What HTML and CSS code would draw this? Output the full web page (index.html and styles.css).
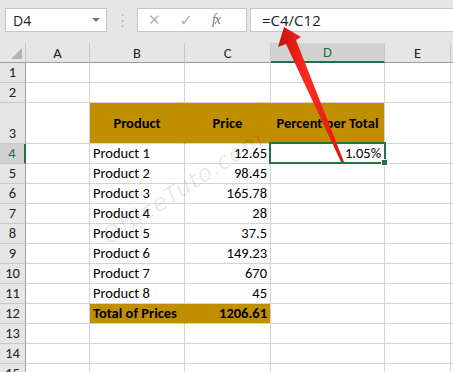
FILE: index.html
```html
<!DOCTYPE html>
<html lang="en">
<head>
<meta charset="UTF-8">
<meta name="viewport" content="width=device-width, initial-scale=1.0">
<title>Percent per Total</title>
<link rel="stylesheet" href="styles.css">
</head>
<body>

<div class="formula-bar">
    <div class="name-box">D4<span class="name-arrow"></span></div>
    <div class="grip">&#8942;</div>
    <div class="fx-buttons">
        <span class="fx-btn">&#10005;</span>
        <span class="fx-btn check">&#10003;</span>
        <span class="fx-btn fx">fx</span>
    </div>
    <div class="formula-input">=C4/C12</div>
</div>

<div class="sheet">
    <!-- column headers -->
    <div class="hd corner"><span class="corner-tri"></span></div>
    <div class="hd col">A</div>
    <div class="hd col">B</div>
    <div class="hd col">C</div>
    <div class="hd col active-col">D</div>
    <div class="hd col">E</div>
    <div class="hd col"></div>

    <div class="hd row">1</div><div class="c"></div><div class="c"></div><div class="c"></div><div class="c"></div><div class="c"></div><div class="c"></div>
    <div class="hd row">2</div><div class="c"></div><div class="c"></div><div class="c"></div><div class="c"></div><div class="c"></div><div class="c"></div>
    <div class="hd row">3</div><div class="c"></div>
    <div class="c gold center mid">Product</div>
    <div class="c gold center mid">Price</div>
    <div class="c gold center mid last">Percent per Total</div>
    <div class="c"></div><div class="c"></div>

    <div class="hd row active-row">4</div><div class="c"></div><div class="c">Product 1</div><div class="c num">12.65</div><div class="c num selected">1.05%</div><div class="c"></div><div class="c"></div>
    <div class="hd row">5</div><div class="c"></div><div class="c">Product 2</div><div class="c num">98.45</div><div class="c"></div><div class="c"></div><div class="c"></div>
    <div class="hd row">6</div><div class="c"></div><div class="c">Product 3</div><div class="c num">165.78</div><div class="c"></div><div class="c"></div><div class="c"></div>
    <div class="hd row">7</div><div class="c"></div><div class="c">Product 4</div><div class="c num">28</div><div class="c"></div><div class="c"></div><div class="c"></div>
    <div class="hd row">8</div><div class="c"></div><div class="c">Product 5</div><div class="c num">37.5</div><div class="c"></div><div class="c"></div><div class="c"></div>
    <div class="hd row">9</div><div class="c"></div><div class="c">Product 6</div><div class="c num">149.23</div><div class="c"></div><div class="c"></div><div class="c"></div>
    <div class="hd row">10</div><div class="c"></div><div class="c">Product 7</div><div class="c num">670</div><div class="c"></div><div class="c"></div><div class="c"></div>
    <div class="hd row">11</div><div class="c"></div><div class="c">Product 8</div><div class="c num">45</div><div class="c"></div><div class="c"></div><div class="c"></div>
    <div class="hd row">12</div><div class="c"></div><div class="c gold">Total of Prices</div><div class="c gold num last">1206.61</div><div class="c"></div><div class="c"></div><div class="c"></div>
    <div class="hd row">13</div><div class="c"></div><div class="c"></div><div class="c"></div><div class="c"></div><div class="c"></div><div class="c"></div>
    <div class="hd row">14</div><div class="c"></div><div class="c"></div><div class="c"></div><div class="c"></div><div class="c"></div><div class="c"></div>
    <div class="hd row">15</div><div class="c"></div><div class="c"></div><div class="c"></div><div class="c"></div><div class="c"></div><div class="c"></div>
</div>

<div class="watermark">OfficeTuto.com</div>

<!-- red pointer from the result cell to the formula -->
<svg class="pointer" width="453" height="372" viewBox="0 0 453 372">
    <defs>
        <linearGradient id="arrowFill" x1="0" y1="0" x2="1" y2="0">
            <stop offset="0" stop-color="#c40f0b"/>
            <stop offset="0.45" stop-color="#ff2b20"/>
            <stop offset="1" stop-color="#d8150f"/>
        </linearGradient>
    </defs>
    <polygon points="284,27 301,37 296,40 344,162 341,162 286,44 278,47" fill="url(#arrowFill)"/>
</svg>

</body>
</html>
```

FILE: styles.css
```css
body {
    margin: 0;
    width: 453px;
    height: 372px;
    overflow: hidden;
    background-color: #fff;
    font-family: Calibri, Carlito, Lato, sans-serif;
    font-size: 14.5px;
    color: #000;
    position: relative;
}

/* formula bar */
.formula-bar {
    height: 43px;
    background-color: #e6e6e6;
    display: flex;
    align-items: flex-start;
    padding-top: 8px;
    box-sizing: border-box;
}
.name-box {
    margin-left: 5px;
    width: 102px;
    height: 24px;
    box-sizing: border-box;
    background-color: #fff;
    border: 1px solid #c6c6c6;
    display: flex;
    align-items: center;
    padding-left: 7px;
    font-family: "Segoe UI", "Open Sans", sans-serif;
    font-size: 14px;
    color: #222;
    position: relative;
}
.name-arrow {
    position: absolute;
    right: 6px;
    top: 9px;
    border-left: 4px solid transparent;
    border-right: 4px solid transparent;
    border-top: 4px solid #777;
}
.grip {
    width: 30px;
    text-align: center;
    color: #bcbcbc;
    font-size: 15px;
    line-height: 24px;
}
.fx-buttons {
    width: 110px;
    height: 24px;
    box-sizing: border-box;
    background-color: #fff;
    border: 1px solid #c6c6c6;
    display: flex;
    align-items: center;
    padding-left: 10px;
    gap: 19px;
}
.fx-btn {
    color: #b3b3b3;
    font-size: 15px;
    font-family: "DejaVu Sans", sans-serif;
}
.fx-btn.check {
    font-size: 16px;
}
.fx-btn.fx {
    font-family: "Liberation Serif", serif;
    font-style: italic;
    color: #777;
    font-size: 14px;
    letter-spacing: -1px;
}
.formula-input {
    margin-left: 3px;
    flex: 1;
    height: 24px;
    box-sizing: border-box;
    background-color: #fff;
    border: 1px solid #c6c6c6;
    border-right: none;
    padding-left: 11px;
    font-family: "Segoe UI", "Open Sans", sans-serif;
    font-size: 15px;
    line-height: 22px;
    color: #222;
}

/* grid */
.sheet {
    display: grid;
    grid-template-columns: 26px 64px 95px 86px 114px 66px 1fr;
    grid-template-rows: 20px 20px 20px 41px;
    grid-auto-rows: 20px;
}
.sheet > div {
    box-sizing: border-box;
    border-right: 1px solid #d4d4d4;
    border-bottom: 1px solid #d4d4d4;
    white-space: nowrap;
    overflow: hidden;
}
.c {
    display: flex;
    align-items: flex-end;
    padding: 0 3px 1px 3px;
    line-height: 18px;
}
.c.num {
    justify-content: flex-end;
}
.c.center {
    justify-content: center;
}
.c.mid {
    align-items: center;
    padding-bottom: 0;
}
.c.gold {
    background-color: #bf8f00;
    font-weight: bold;
    border-right-color: #bf8f00;
}
.c.gold.last {
    border-right-color: #d4d4d4;
}
.c.selected {
    position: relative;
    overflow: visible;
}
.c.selected::after {
    content: "";
    position: absolute;
    left: -2px;
    top: -2px;
    right: -2px;
    bottom: -1px;
    border: 2px solid #217346;
}
.c.selected::before {
    content: "";
    position: absolute;
    right: -4px;
    bottom: -3px;
    width: 5px;
    height: 5px;
    background-color: #217346;
    border: 1px solid #fff;
    z-index: 1;
}

/* headers */
.hd {
    background-color: #e6e6e6;
    color: #222;
    display: flex;
    justify-content: center;
    align-items: flex-end;
    line-height: 18px;
    font-size: 14.5px;
}
.sheet > .hd.col {
    border-right-color: #c8c8c8;
    border-bottom-color: #9b9b9b;
    align-items: center;
}
.sheet > .hd.row {
    border-right-color: #9b9b9b;
    border-bottom-color: #c8c8c8;
    padding-bottom: 1px;
}
.sheet > .hd.corner {
    border-right-color: #c8c8c8;
    border-bottom-color: #9b9b9b;
    position: relative;
}
.corner-tri {
    position: absolute;
    right: 3px;
    bottom: 3px;
    border-left: 11px solid transparent;
    border-bottom: 11px solid #b4b4b4;
}
.sheet > .hd.active-col {
    background-color: #d2d2d2;
    color: #217346;
    border-bottom: 2px solid #217346;
}
.sheet > .hd.active-row {
    background-color: #d2d2d2;
    color: #217346;
    border-right: 2px solid #217346;
}

/* overlays */
.watermark {
    position: absolute;
    left: 112px;
    top: 222px;
    line-height: 28px;
    font-family: "DejaVu Sans", sans-serif;
    font-style: italic;
    font-size: 23px;
    color: rgba(0, 0, 0, 0.09);
    transform: rotate(-33deg);
    transform-origin: left bottom;
    pointer-events: none;
    letter-spacing: 1px;
}
.pointer {
    position: absolute;
    left: 0;
    top: 0;
    pointer-events: none;
}
```
